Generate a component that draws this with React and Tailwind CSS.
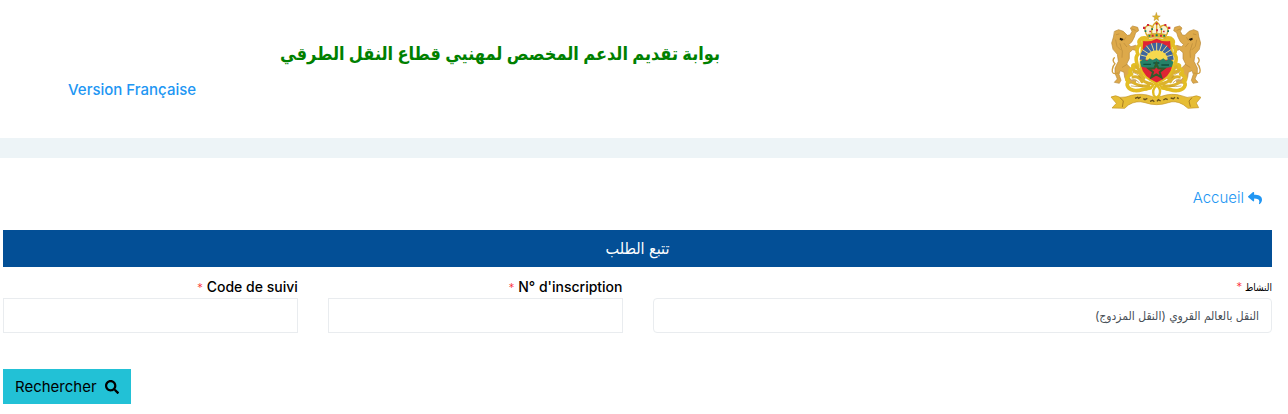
import { FaReply, FaSearch } from 'react-icons/fa';

function LionAndHorns() {
  return (
    <g strokeLinecap="round" strokeLinejoin="round">
      {/* lion */}
      <path
        d="M44 82 L56 77 L70 82 L82 94 L90 93 L96 82 L91 72 L98 66 L113 70 L116 80 L107 86 L103 99 L96 113 L86 122 L93 128 L107 124 L117 132 L111 140 L98 137 L88 146 L88 164 L80 180 L92 192 L94 208 L86 218 L94 229 L108 230 L106 237 L82 238 L74 220 L72 205 L61 200 L57 211 L63 229 L58 238 L43 235 L52 225 L45 208 L45 192 L55 172 L52 151 L39 136 L35 117 L40 100 Z"
        fill="#dda94a"
        stroke="#b88a3a"
        strokeWidth="2"
      />
      <path
        d="M55 207 Q34 214 37 196 Q39 184 45 179 Q35 169 43 161"
        fill="none"
        stroke="#cf9d3f"
        strokeWidth="4"
      />
      <path
        d="M47 108 L51 127 L61 137 M60 119 L67 142 L66 160 M72 118 L80 128 M49 92 L57 90 M77 101 L72 109 M81 181 L67 190 M96 75 L106 79"
        fill="none"
        stroke="#b88a3a"
        strokeWidth="2"
      />
      <path d="M60 101 L71 105 L66 110 L59 107 Z" fill="#17130b" />
      {/* horn of plenty */}
      <path
        d="M142 103 C120 98 112 112 121 122 C108 128 110 144 114 151 C102 160 112 176 112 187 C100 178 95 184 102 193 C90 194 86 205 95 210 C80 216 76 228 86 232 C76 242 84 256 101 259 C118 264 132 252 151 252"
        fill="none"
        stroke="#e3bd24"
        strokeWidth="11"
      />
      <path
        d="M101 200 Q120 204 132 223 M99 219 Q116 215 126 233 M108 188 Q121 197 125 211 M118 218 Q130 236 156 240 M100 236 Q120 248 146 246"
        fill="none"
        stroke="#dcb22c"
        strokeWidth="9"
      />
      <path
        d="M98 204 Q114 208 122 222 M95 225 Q108 224 118 236 M94 246 Q112 250 128 246"
        fill="none"
        stroke="#b88a22"
        strokeWidth="2"
      />
    </g>
  );
}

function Emblem() {
  return (
    <svg
      viewBox="30 24 273 291"
      className="h-[97px] w-[91px] shrink-0"
      role="img"
      aria-label="شعار المملكة المغربية"
    >
      <LionAndHorns />
      <g transform="translate(337 0) scale(-1 1)">
        <LionAndHorns />
      </g>

      {/* shield */}
      <path
        d="M127 107 Q152 112 170 101 Q188 112 213 107 L219 188 Q214 220 170 239 Q126 220 121 188 Z"
        fill="#df2434"
        stroke="#e4bf20"
        strokeWidth="6"
      />
      <path d="M119 167 A51 51 0 0 1 221 167 Z" fill="#3c649f" />
      <path
        d="M170 165 L122 153 M170 165 L127 137 M170 165 L139 125 M170 165 L154 118 M170 165 V116 M170 165 L186 118 M170 165 L201 125 M170 165 L213 137 M170 165 L218 153"
        stroke="#e8d989"
        strokeWidth="3"
      />
      <path d="M137 167 A33 28 0 0 1 203 167 Z" fill="#f7d84e" />
      <path
        d="M120 173 L131 165 L141 171 L149 163 L158 169 L169 162 L179 170 L190 163 L198 170 L209 165 L220 174 L216 188 L198 192 H143 L124 188 Z"
        fill="#268268"
      />
      <path d="M130 181 H153 M160 177 H178 M184 183 H207" stroke="#124f3c" strokeWidth="4" />
      <path
        d="M169 178 L175 193 L192 194 L179 204 L184 220 L169 211 L154 220 L159 204 L146 194 L163 193 Z"
        fill="none"
        stroke="#315b2d"
        strokeWidth="6"
      />

      {/* crown */}
      <path d="M144 103 Q127 70 143 64 Q152 59 157 65 Q168 49 181 65 Q194 58 202 69 Q209 80 195 103 Z" fill="#f8f3d5" />
      <path
        d="M145 101 Q128 76 139 67 Q148 59 160 71 M195 101 Q211 77 199 67 Q190 59 179 71 M157 98 Q149 68 170 53 Q191 70 182 98 M170 53 V98"
        fill="none"
        stroke="#d7a926"
        strokeWidth="4"
      />
      <path d="M143 91 Q170 84 197 91 L195 103 Q170 97 145 103 Z" fill="#dfb52b" stroke="#a97921" strokeWidth="1" />
      <path d="M169 25 L172 35 L181 36 L174 41 L176 50 L169 45 L162 50 L164 41 L157 36 L166 35 Z" fill="#ddb52c" stroke="#a97921" strokeWidth="1" />
      <path
        d="M129 68h7v7h-7z M141 60h6v6h-6z M193 60h6v6h-6z M204 68h7v7h-7z M167 56h6v6h-6z M155 92h6v6h-6z M180 92h6v6h-6z M168 76h6v6h-6z M148 80h5v5h-5z M189 80h5v5h-5z"
        fill="#cf283b"
      />
      <path d="M146 93h5v5h-5z M167 91h6v6h-6z M190 93h5v5h-5z M154 73h5v5h-5z M182 73h5v5h-5z M134 79h5v5h-5z M202 79h5v5h-5z" fill="#17795b" />

      {/* ribbon */}
      <path
        d="M33 279 Q48 271 60 280 Q79 281 94 274 Q126 266 158 278 Q170 283 184 277 Q216 266 244 275 Q262 284 278 278 Q290 272 303 280 L289 297 L296 311 L264 313 L250 302 Q226 288 205 296 Q170 308 135 296 Q109 288 85 303 L74 313 L36 312 L49 298 Z"
        fill="#e6bd35"
        stroke="#c29425"
        strokeWidth="2"
      />
      <path
        d="M130 257 Q150 257 158 246 Q164 236 170 244 Q185 256 178 273 Q169 287 161 273 Q155 257 170 244 Q178 240 184 248 Q192 257 210 257"
        fill="none"
        stroke="#e1ba20"
        strokeWidth="7"
      />
      <path
        d="M105 283 l8 -3 l3 3 l6 -4 M130 284 l5 3 l7 -4 M150 292 l8 -3 l5 4 M171 292 l4 -5 l7 4 M190 288 l7 -4 l6 3 M212 282 l8 2 l5 -4 M231 281 l5 3"
        fill="none"
        stroke="#66501b"
        strokeWidth="4"
      />
      <path d="M60 281 L70 291 L67 309 M276 281 L267 291 L271 308" fill="none" stroke="#a97d23" strokeWidth="3" />
    </svg>
  );
}

function Label({ htmlFor, children, className }) {
  return (
    <label htmlFor={htmlFor} className={`block h-5 leading-5 text-black ${className}`}>
      {children} <span className="text-xs font-light text-red-500">*</span>
    </label>
  );
}

export default function App() {
  return (
    <div dir="rtl" lang="ar" className="bg-white font-['Inter','DejaVu_Sans_Condensed','DejaVu_Sans',sans-serif] text-sm">
      {/* Header */}
      <header className="flex h-[158px] items-start border-b-20 border-[#edf4f7] ps-[87px] pe-[68px] pt-3">
        <Emblem />
        <h1 className="ms-[390px] pt-6 text-lg leading-9 font-bold whitespace-nowrap text-[#008000]">
          بوابة تقديم الدعم المخصص لمهنيي قطاع النقل الطرقي
        </h1>
        <a href="#fr" lang="fr" className="ms-auto mt-[68px] text-[15px] leading-5 font-medium whitespace-nowrap text-[#2196f3]">
          Version Française
        </a>
      </header>

      <main className="ps-4 pe-[3px] pb-2.5">
        <nav className="flex ps-2.5 pt-[30px]">
          <a href="#accueil" className="flex items-center gap-1 text-[15px] leading-5 font-light text-[#2196f3]">
            <FaReply className="size-3.5" />
            Accueil
          </a>
        </nav>

        <h2 className="mt-[22px] bg-[#034f96] text-center text-base leading-[37px] text-white">تتبع الطلب</h2>

        <form>
          <div className="mt-2.5 grid grid-cols-4 gap-[30px]">
            <div className="col-span-2">
              <Label htmlFor="activite" className="text-[10px]">النشاط</Label>
              <select
                id="activite"
                className="mt-px h-[35px] w-full appearance-none rounded border border-[#e9ecef] bg-white px-3 text-xs text-[#495057]"
              >
                <option>النقل بالعالم القروي (النقل المزدوج)</option>
              </select>
            </div>
            <div>
              <Label htmlFor="inscription" className="font-medium">N° d'inscription</Label>
              <input id="inscription" type="text" className="mt-px h-[35px] w-full border border-[#e9ecef] px-3" />
            </div>
            <div>
              <Label htmlFor="code" className="font-medium">Code de suivi</Label>
              <input id="code" type="text" className="mt-px h-[35px] w-full border border-[#e9ecef] px-3" />
            </div>
          </div>
          <div className="mt-9 flex justify-end">
            <button type="button" className="flex h-[35px] items-center gap-2 bg-[#22c1d6] px-3 text-[15px] text-black">
              <FaSearch className="size-3.5" />
              Rechercher
            </button>
          </div>
        </form>
      </main>
    </div>
  );
}
